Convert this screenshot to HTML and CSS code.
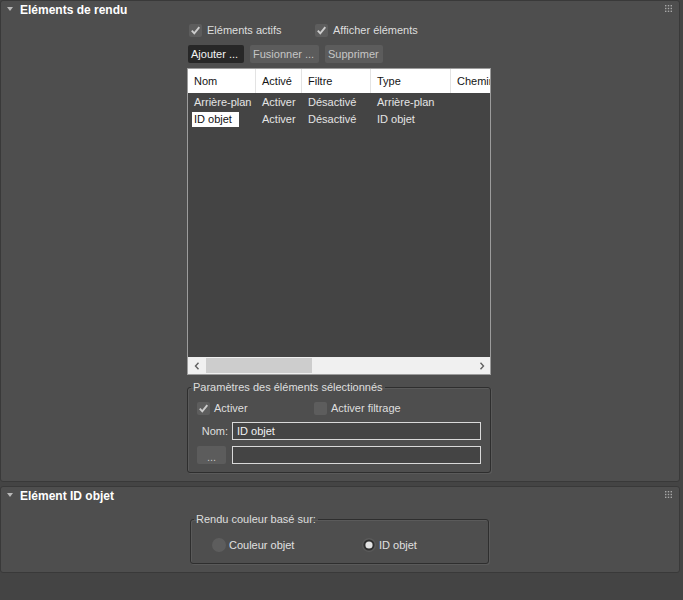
FILE: index.html
```html
<!DOCTYPE html>
<html lang="fr">
<head>
<meta charset="utf-8">
<title>Eléments de rendu</title>
<link rel="stylesheet" href="styles.css">
</head>
<body>
<div class="page">
  <section class="rollout r1">
    <div class="rhead">
      <span class="tri"></span>
      <span class="rtitle">Eléments de rendu</span>
      <svg class="grip" width="7" height="7" viewBox="0 0 7 7"><g fill="#a8a8a8"><rect x="0" y="0" width="1.4" height="1.4"/><rect x="2.8" y="0" width="1.4" height="1.4"/><rect x="5.6" y="0" width="1.4" height="1.4"/><rect x="0" y="2.8" width="1.4" height="1.4"/><rect x="2.8" y="2.8" width="1.4" height="1.4"/><rect x="5.6" y="2.8" width="1.4" height="1.4"/><rect x="0" y="5.6" width="1.4" height="1.4"/><rect x="2.8" y="5.6" width="1.4" height="1.4"/><rect x="5.6" y="5.6" width="1.4" height="1.4"/></g></svg>
    </div>
    <div class="content c1">
      <div class="checks">
        <span class="cb cb-actifs"><span class="box"><svg width="13" height="13" viewBox="0 0 13 13"><path d="M2.8 6.6 L5.3 9.3 L10.3 3.2" fill="none" stroke="#cdcdcd" stroke-width="1.9"/></svg></span>Eléments actifs</span>
        <span class="cb"><span class="box"><svg width="13" height="13" viewBox="0 0 13 13"><path d="M2.8 6.6 L5.3 9.3 L10.3 3.2" fill="none" stroke="#cdcdcd" stroke-width="1.9"/></svg></span>Afficher éléments</span>
      </div>
      <div class="btns">
        <span class="btn btn-dark b-add">Ajouter ...</span>
        <span class="btn b-merge">Fusionner ...</span>
        <span class="btn b-del">Supprimer</span>
      </div>
      <div class="list">
        <div class="lhead">
          <span class="hc hc-name">Nom</span>
          <span class="hc">Activé</span>
          <span class="hc">Filtre</span>
          <span class="hc">Type</span>
          <span class="hc hc-last">Chemin</span>
        </div>
        <div class="lbody">
          <div class="lrow">
            <span class="bc bc-name"><span class="nm">Arrière-plan</span></span>
            <span class="bc">Activer</span>
            <span class="bc">Désactivé</span>
            <span class="bc">Arrière-plan</span>
            <span class="bc"></span>
          </div>
          <div class="lrow">
            <span class="bc bc-name"><span class="nm sel">ID objet</span></span>
            <span class="bc">Activer</span>
            <span class="bc">Désactivé</span>
            <span class="bc">ID objet</span>
            <span class="bc"></span>
          </div>
        </div>
        <div class="hscroll">
          <span class="arrow"><svg width="6" height="8" viewBox="0 0 6 8"><path d="M4.5 0.8 L1.5 4 L4.5 7.2" fill="none" stroke="#606060" stroke-width="1.4"/></svg></span>
          <span class="track"><span class="thumb"></span></span>
          <span class="arrow"><svg width="6" height="8" viewBox="0 0 6 8"><path d="M1.5 0.8 L4.5 4 L1.5 7.2" fill="none" stroke="#606060" stroke-width="1.4"/></svg></span>
        </div>
      </div>
      <fieldset class="grp g1">
        <legend>Paramètres des éléments sélectionnés</legend>
        <div class="ginner">
          <div class="grow-checks">
            <span class="cb cb-act"><span class="box"><svg width="13" height="13" viewBox="0 0 13 13"><path d="M2.8 6.6 L5.3 9.3 L10.3 3.2" fill="none" stroke="#cdcdcd" stroke-width="1.9"/></svg></span>Activer</span>
            <span class="cb"><span class="box"></span>Activer filtrage</span>
          </div>
          <div class="grow-name">
            <span class="lbl">Nom:</span>
            <span class="inp">ID objet</span>
          </div>
          <div class="grow-path">
            <span class="btn btn-dots">...</span>
            <span class="inp"></span>
          </div>
        </div>
      </fieldset>
    </div>
  </section>

  <section class="rollout r2">
    <div class="rhead">
      <span class="tri"></span>
      <span class="rtitle">Elément ID objet</span>
      <svg class="grip" width="7" height="7" viewBox="0 0 7 7"><g fill="#a8a8a8"><rect x="0" y="0" width="1.4" height="1.4"/><rect x="2.8" y="0" width="1.4" height="1.4"/><rect x="5.6" y="0" width="1.4" height="1.4"/><rect x="0" y="2.8" width="1.4" height="1.4"/><rect x="2.8" y="2.8" width="1.4" height="1.4"/><rect x="5.6" y="2.8" width="1.4" height="1.4"/><rect x="0" y="5.6" width="1.4" height="1.4"/><rect x="2.8" y="5.6" width="1.4" height="1.4"/><rect x="5.6" y="5.6" width="1.4" height="1.4"/></g></svg>
    </div>
    <div class="content c2">
      <fieldset class="grp g2">
        <legend>Rendu couleur basé sur:</legend>
        <div class="radios">
          <span class="rb rb-color"><svg width="14" height="14" viewBox="0 0 14 14"><circle cx="7" cy="7" r="7" fill="#5d5d5d"/></svg>Couleur objet</span>
          <span class="rb rb-id"><svg width="14" height="14" viewBox="0 0 14 14"><circle cx="7" cy="7" r="7" fill="#5a5a5a"/><circle cx="7" cy="7" r="5.6" fill="#2f2f2f"/><circle cx="7" cy="7" r="3.6" fill="#e2e2e2"/></svg>ID objet</span>
        </div>
      </fieldset>
    </div>
  </section>
</div>
</body>
</html>
```

FILE: styles.css
```css
* { box-sizing: border-box; }

html, body {
  margin: 0;
  padding: 0;
  background: #444444;
}

body {
  font-family: "Liberation Sans", Arial, sans-serif;
  font-size: 11px;
  color: #dcdcdc;
  width: 683px;
  height: 600px;
  overflow: hidden;
}

.page {
  width: 680px;
  display: flex;
  flex-direction: column;
}

.rollout {
  background: #4e4e4e;
  border: 1px solid #393939;
  border-radius: 3px;
}

.r1 { height: 482px; }
.r2 { height: 87px; margin-top: 4px; }

.rhead {
  height: 17px;
  display: flex;
  align-items: center;
}

.tri {
  width: 0;
  height: 0;
  margin-left: 6px;
  margin-top: -1px;
  border-left: 3px solid transparent;
  border-right: 3px solid transparent;
  border-top: 4px solid #b8b8b8;
}

.rtitle {
  margin-left: 7px;
  font-size: 12px;
  font-weight: bold;
  color: #ffffff;
  line-height: 14px;
}

.grip {
  margin-left: auto;
  margin-right: 7px;
  margin-top: -2px;
}

.content {
  display: flex;
  flex-direction: column;
}

.c1 {
  margin-left: 186px;
  width: 304px;
}

/* checkbox */
.cb {
  display: inline-flex;
  align-items: center;
  height: 13px;
  line-height: 13px;
  color: #dedede;
  white-space: nowrap;
}

.box {
  width: 13px;
  height: 13px;
  background: #5d5d5d;
  border-radius: 2px;
  margin-right: 4px;
  display: inline-block;
  flex: none;
}

.box svg { display: block; }

.checks {
  margin-top: 6px;
  height: 13px;
  display: flex;
  padding-left: 2px;
}

.cb-actifs { width: 126px; }

.checks .box { margin-right: 5px; }

/* buttons */
.btns {
  margin-top: 8px;
  display: flex;
  gap: 6px;
  padding-left: 1px;
}

.btn {
  height: 18px;
  line-height: 18px;
  padding-left: 3px;
  background: #5c5c5c;
  color: #c6c6c6;
  border-radius: 2px;
  white-space: nowrap;
  display: inline-block;
}

.btn-dark {
  background: #272727;
  color: #f4f4f4;
}

.b-add { width: 56px; }
.b-merge { width: 69px; }
.b-del { width: 58px; }

/* list */
.list {
  margin-top: 5px;
  height: 307px;
  border: 1px solid #9c9c9c;
  background: #444444;
  display: flex;
  flex-direction: column;
}

.lhead,
.lrow {
  display: grid;
  grid-template-columns: 68px 46px 69px 80px 1fr;
}

.lhead {
  height: 24px;
  background: #ffffff;
  flex: none;
}

.hc {
  border-right: 1px solid #e3e3e3;
  padding-left: 6px;
  line-height: 24px;
  color: #141414;
  white-space: nowrap;
  overflow: hidden;
}

.hc-last { border-right: none; }

.lbody {
  flex: 1;
  padding-top: 1px;
}

.lrow {
  height: 17px;
  align-items: center;
}

.bc {
  padding-left: 6px;
  line-height: 15px;
  color: #e4e4e4;
  white-space: nowrap;
  overflow: hidden;
}

.bc-name { padding-left: 4px; }

.nm {
  display: inline-block;
  padding: 0 2px;
  height: 15px;
  line-height: 15px;
}

.nm.sel {
  background: #ffffff;
  color: #111111;
  width: 47px;
}

.hscroll {
  height: 17px;
  background: #f0f0f0;
  display: flex;
  flex: none;
}

.arrow {
  width: 17px;
  display: flex;
  align-items: center;
  justify-content: center;
  flex: none;
}

.track {
  flex: 1;
  padding: 1px 0;
  display: flex;
}

.thumb {
  width: 106px;
  margin-left: 1px;
  background: #cdcdcd;
}

/* group boxes */
.grp {
  margin: 0;
  padding: 0;
  min-width: 0;
  border: 1px solid #2e2e2e;
  border-radius: 3px;
  box-shadow: 1px 1px 0 #5a5a5a, inset 1px 1px 0 #5a5a5a;
}

.grp legend {
  padding: 0 2px;
  margin-left: 3px;
  line-height: 14px;
  color: #dedede;
}

.g1 {
  margin-top: 5px;
  width: 304px;
  height: 93px;
}

.ginner {
  padding: 8px 0 0 9px;
  display: flex;
  flex-direction: column;
}

.grow-checks {
  display: flex;
  height: 13px;
}

.cb-act { width: 117px; }
.grow-checks .box { margin-right: 4px; }

.grow-name {
  margin-top: 7px;
  display: flex;
  align-items: center;
}

.lbl {
  width: 31px;
  text-align: right;
  color: #dedede;
}

.inp {
  height: 18px;
  width: 249px;
  margin-left: 4px;
  border: 1px solid #d9d9d9;
  background: #444444;
  color: #f2f2f2;
  line-height: 16px;
  padding-left: 4px;
}

.grow-path {
  margin-top: 6px;
  display: flex;
}

.btn-dots {
  width: 29px;
  padding-left: 0;
  text-align: center;
  line-height: 22px;
}

.grow-path .inp { margin-left: 6px; }

/* second rollout */
.c2 {
  margin-left: 189px;
  margin-top: 8px;
}

.g2 {
  width: 299px;
  height: 52px;
}

.radios {
  display: flex;
  padding: 12px 0 0 21px;
}

.rb {
  display: inline-flex;
  align-items: center;
  gap: 3px;
  color: #e0e0e0;
  white-space: nowrap;
}

.rb svg { display: block; flex: none; }

.rb-color { width: 150px; }
.rb-color span, .rb-color { line-height: 14px; }
.rb-id { margin-top: -1px; }
```
